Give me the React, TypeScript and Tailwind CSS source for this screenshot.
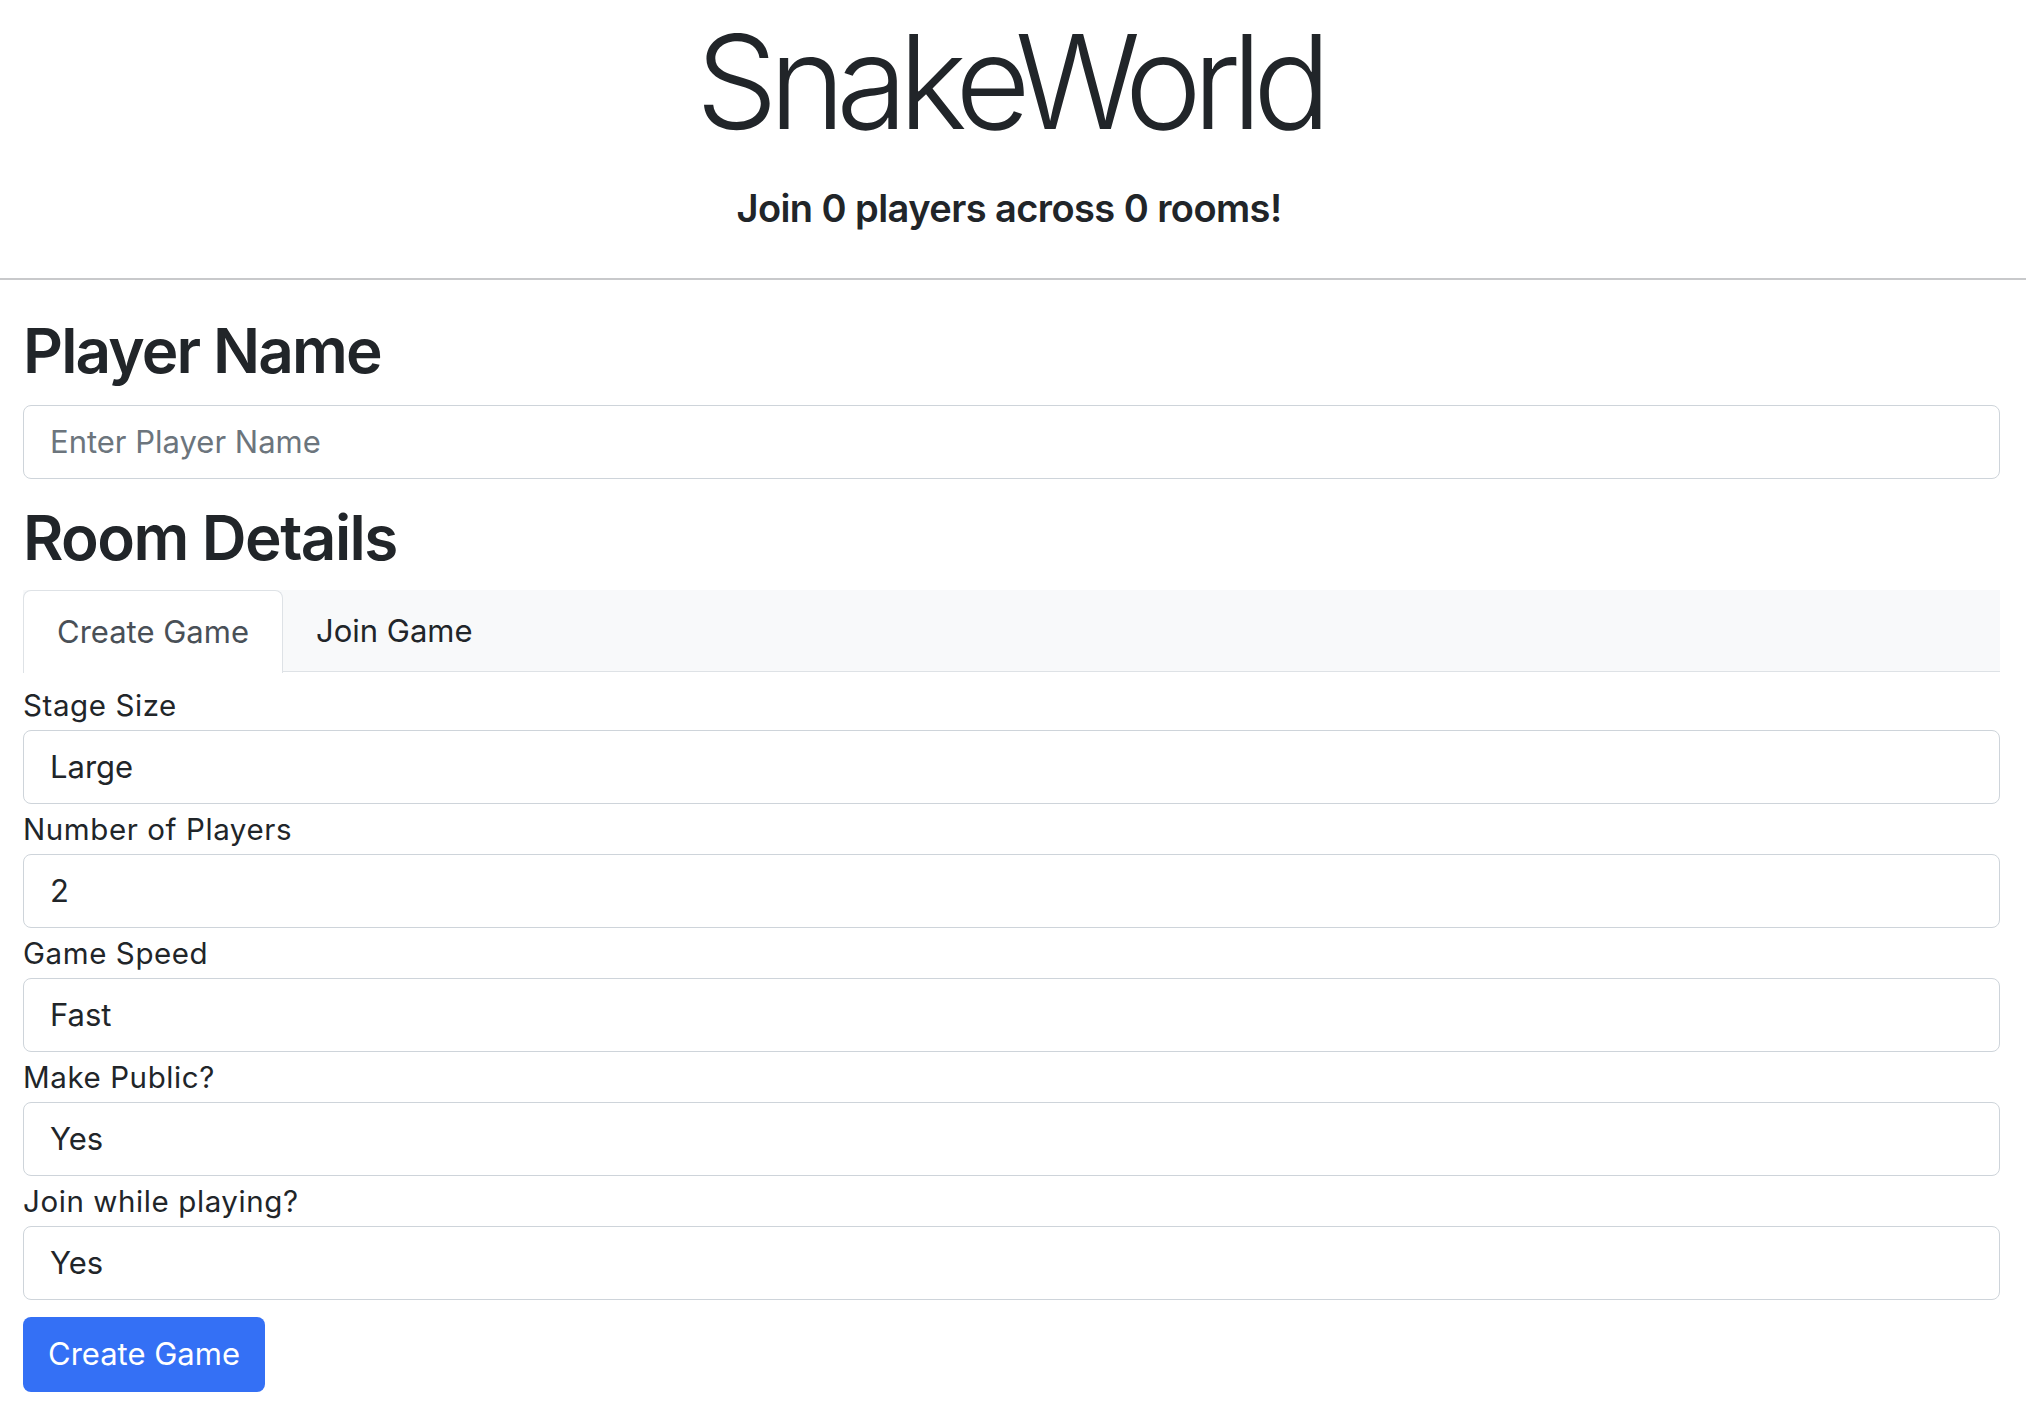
import React, { useState } from "react";

const fields = [
  { label: "Stage Size", value: "Large" },
  { label: "Number of Players", value: "2" },
  { label: "Game Speed", value: "Fast" },
  { label: "Make Public?", value: "Yes" },
  { label: "Join while playing?", value: "Yes" },
];

const App = () => {
  const [tab, setTab] = useState("create");
  return (
    <div className="min-h-screen bg-white text-[#212529] font-['Inter',sans-serif]">
      {/* header */}
      <div className="text-center pt-[17px] pr-[8px]">
        <h1 className="text-[130px] leading-none font-light tracking-[-0.07em]">SnakeWorld</h1>
        <div className="mt-[42px] text-[38px] leading-none font-semibold tracking-[-0.015em]">
          Join 0 players across 0 rooms!
        </div>
      </div>
      <div className="mt-[51px] h-[2px] bg-[#c8c9cb]" />

      <div className="pl-[23px] pr-[26px]">
        <h2 className="mt-[40px] text-[62px] leading-none font-semibold tracking-[-0.03em]">Player Name</h2>
        <div className="mt-[23px] h-[74px] flex items-center px-[26px] border-[1.5px] border-[#ced4da] rounded-[8px] text-[31px] text-[#6c757d]">
          Enter Player Name
        </div>

        <h2 className="mt-[28px] text-[62px] leading-none font-semibold tracking-[-0.025em]">Room Details</h2>

        {/* tabs */}
        <div className="mt-[21px] flex bg-[#f8f9fa] border-b-[1.5px] border-[#dee2e6] h-[82px]">
          <button
            onClick={() => setTab("create")}
            className={`px-[33px] text-[31px] rounded-t-[8px] -mb-[1.5px] ${
              tab == "create"
                ? "bg-white text-[#495057] border-[1.5px] border-b-0 border-[#dee2e6]"
                : "text-[#212529]"
            }`}
          >
            Create Game
          </button>
          <button
            onClick={() => setTab("join")}
            className={`px-[33px] text-[31px] rounded-t-[8px] -mb-[1.5px] ${
              tab == "join"
                ? "bg-white text-[#495057] border-[1.5px] border-b-0 border-[#dee2e6]"
                : "text-[#212529]"
            }`}
          >
            Join Game
          </button>
        </div>

        <div className="pt-[8px]">
          {fields.map((f, i) => (
            <div key={i}>
              <div className="mt-[11px] text-[29.5px] leading-[29px] tracking-[0.02em]">{f.label}</div>
              <div className="mt-[10px] h-[74px] flex items-center px-[26px] border-[1.5px] border-[#ced4da] rounded-[8px] text-[31px]">
                {f.value}
              </div>
            </div>
          ))}
          <button className="mt-[17px] h-[75px] w-[242px] bg-[#3470f5] rounded-[8px] text-white text-[31px]">
            Create Game
          </button>
        </div>
      </div>
    </div>
  );
};

export default App;
